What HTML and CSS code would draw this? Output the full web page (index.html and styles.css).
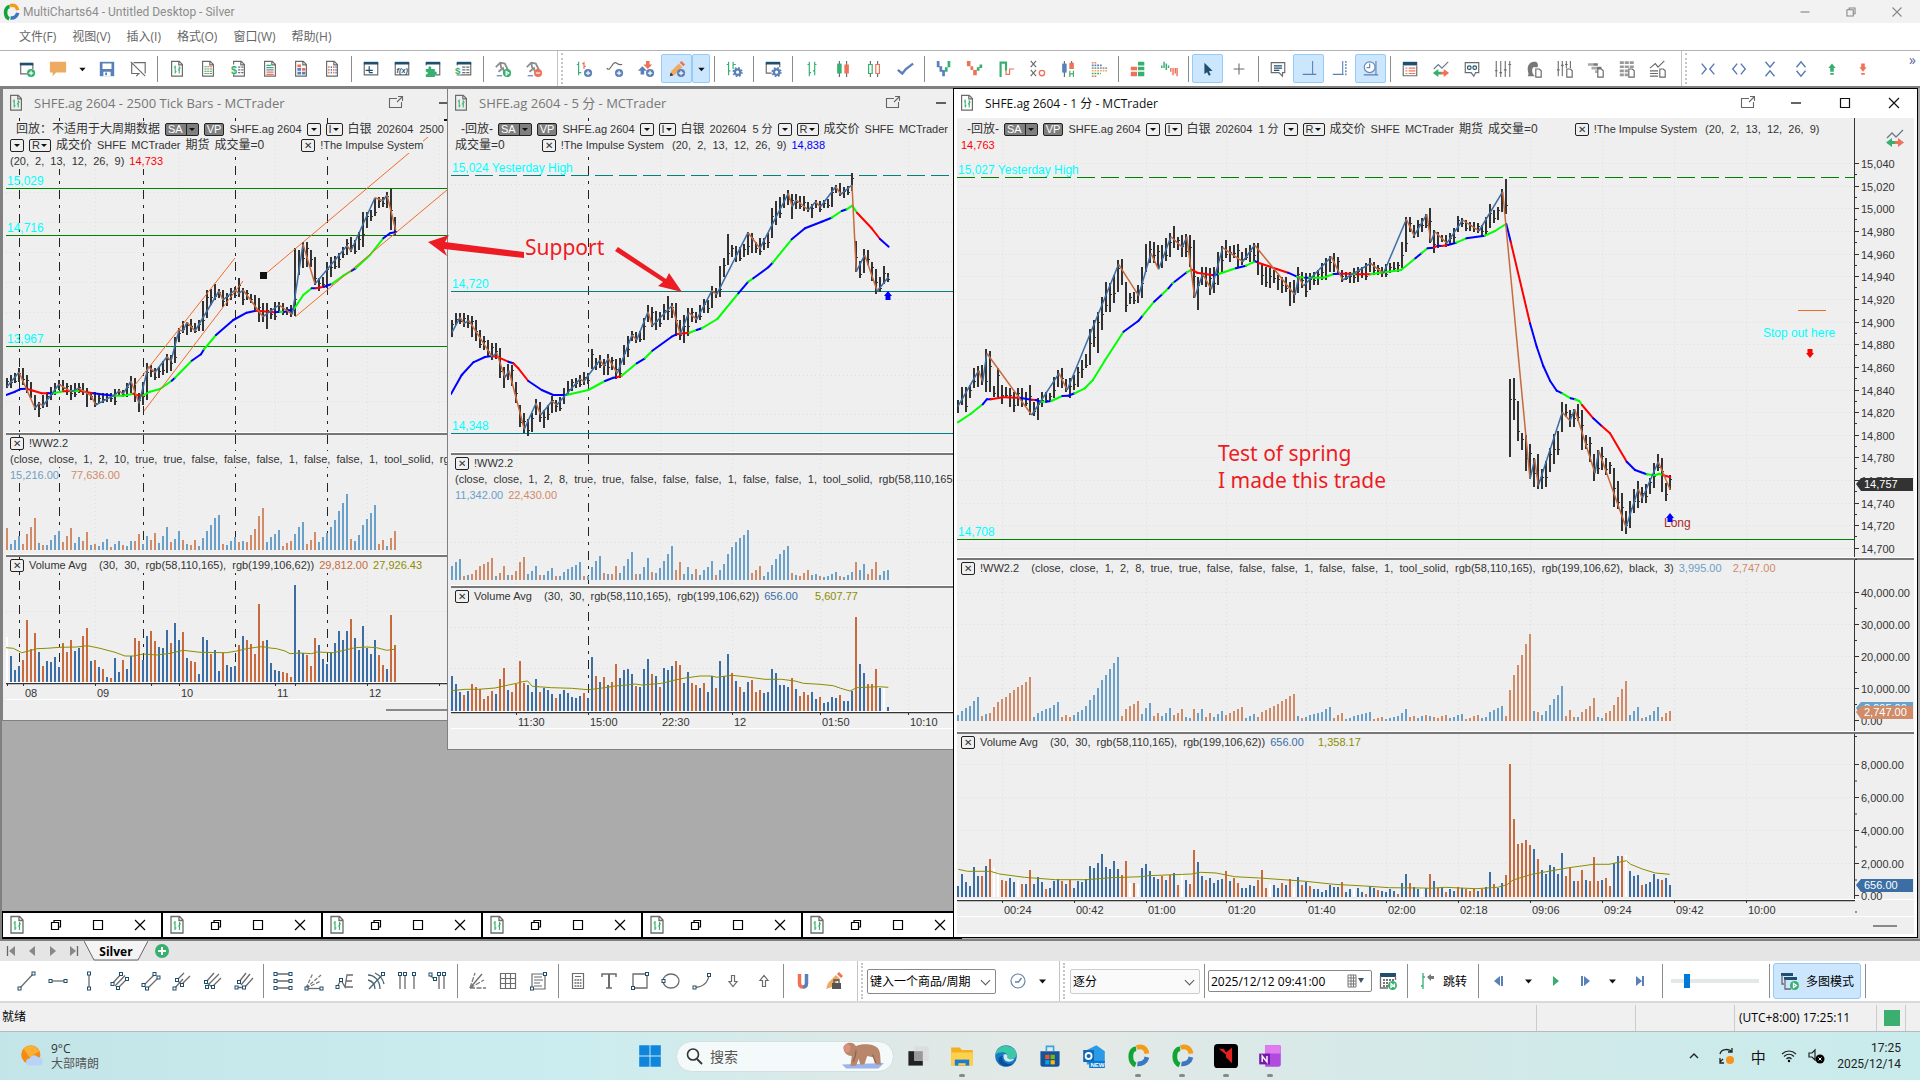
FILE: index.html
```html
<!DOCTYPE html>
<html lang="zh-CN">
<head>
    <meta charset="UTF-8">
    <title>MultiCharts64 - Untitled Desktop - Silver</title>
    <link rel="stylesheet" href="styles.css">
</head>
<body>
    <header class="titlebar">
        <span class="app-logo" data-icon="logo"></span>
        <span class="app-name">MultiCharts64 - Untitled Desktop - Silver</span>
        <div class="app-controls">
            <button data-icon="min" aria-label="最小化"></button>
            <button data-icon="restore" aria-label="还原"></button>
            <button data-icon="close" aria-label="关闭"></button>
        </div>
    </header>

    <nav class="menubar">
        <a href="#">文件(F)</a>
        <a href="#">视图(V)</a>
        <a href="#">插入(I)</a>
        <a href="#">格式(O)</a>
        <a href="#">窗口(W)</a>
        <a href="#">帮助(H)</a>
    </nav>

    <div class="toolbar toolbar-top">
        <div class="tools" data-tools="newWindow open caret save noPresent | docBars docTable docDollar docText docBlocks docDots | tradeBar formula puzzle dollarList | robotOn robotOff"></div>
        <div class="tools handle" data-tools="addBars addStudy addArrows pencil* caret* | barsGear | windowGear | bars candles hollow check | stepBlue stepRed kagi pointFigure heikin profile | blocks delta | cursor* cross | note axisLine* axisDots axisClock* | listRed trade glasses sliders headDoc slidersDoc ladderDoc tableDoc chartDoc"></div>
        <div class="tools handle" data-tools="squeezeH expandH squeezeV expandV upGreen downRed"></div>
        <button class="more" aria-label="更多">»</button>
    </div>

    <main class="workspace">
        <section class="window window-tick">
            <div class="window-title">
                <span class="window-icon" data-icon="docBars"></span>
                <h2>SHFE.ag 2604 - 2500 Tick Bars - MCTrader</h2>
                <button data-icon="popout" aria-label="弹出"></button>
                <button data-icon="min" aria-label="最小化"></button>
                <button data-icon="max" aria-label="最大化"></button>
                <button data-icon="close" aria-label="关闭"></button>
            </div>
            <div class="pane">
                <svg class="plot" id="tick-price"></svg>
                <div class="legend">
                    <div class="row indent"><span class="cjk">回放：不适用于大周期数据</span><button class="tag">SA<i></i></button><button class="tag">VP</button><span>SHFE.ag 2604</span><button class="drop"></button><button class="drop">I</button><span class="cjk">白银</span><span>202604&nbsp; 2500 Ticks</span></div>
                    <div class="row"><button class="drop"></button><button class="drop">R</button><span class="cjk">成交价</span><span>SHFE</span><span>MCTrader</span><span class="cjk">期货</span><span class="cjk">成交量=0</span><button class="cross far" aria-label="移除">✕</button><span>!The Impulse System</span></div>
                    <div class="row"><span>(20,  2,  13,  12,  26,  9)</span><span class="red">14,733</span></div>
                </div>
            </div>
            <div class="pane split">
                <svg class="plot" id="tick-ww"></svg>
                <div class="legend">
                    <div class="row"><button class="cross" aria-label="移除">✕</button><span>!WW2.2</span></div>
                    <div class="row"><span>(close,  close,  1,  2,  10,  true,  true,  false,  false,  false,  1,  false,  false,  1,  tool_solid,  rgb</span></div>
                    <div class="row wide"><span class="sky">15,216.00</span><span class="clay">77,636.00</span></div>
                </div>
            </div>
            <div class="pane split">
                <svg class="plot" id="tick-volume"></svg>
                <div class="legend">
                    <div class="row"><button class="cross" aria-label="移除">✕</button><span>Volume Avg    (30,  30,  rgb(58,110,165),  rgb(199,106,62))</span><span class="rust">29,812.00</span><span class="olive">27,926.43</span></div>
                </div>
            </div>
            <svg class="time-axis" id="tick-time"></svg>
            <div class="scroll"><span></span></div>
        </section>

        <section class="window window-five">
            <div class="window-title">
                <span class="window-icon" data-icon="docBars"></span>
                <h2>SHFE.ag 2604 - 5 分 - MCTrader</h2>
                <button data-icon="popout" aria-label="弹出"></button>
                <button data-icon="min" aria-label="最小化"></button>
                <button data-icon="max" aria-label="最大化"></button>
                <button data-icon="close" aria-label="关闭"></button>
            </div>
            <div class="pane">
                <svg class="plot" id="five-price"></svg>
                <div class="legend">
                    <div class="row indent"><span class="cjk">-回放-</span><button class="tag">SA<i></i></button><button class="tag">VP</button><span>SHFE.ag 2604</span><button class="drop"></button><button class="drop">I</button><span class="cjk">白银</span><span>202604&nbsp; 5 分</span><button class="drop"></button><button class="drop">R</button><span class="cjk">成交价</span><span>SHFE</span><span>MCTrader</span><span class="cjk">期货</span></div>
                    <div class="row"><span class="cjk">成交量=0</span><button class="cross far" aria-label="移除">✕</button><span>!The Impulse System</span><span> (20,  2,  13,  12,  26,  9)</span><span class="blue">14,838</span></div>
                </div>
            </div>
            <div class="pane split">
                <svg class="plot" id="five-ww"></svg>
                <div class="legend">
                    <div class="row"><button class="cross" aria-label="移除">✕</button><span>!WW2.2</span></div>
                    <div class="row"><span>(close,  close,  1,  2,  8,  true,  true,  false,  false,  false,  1,  false,  false,  1,  tool_solid,  rgb(58,110,165)</span></div>
                    <div class="row"><span class="sky">11,342.00</span><span class="clay">22,430.00</span></div>
                </div>
            </div>
            <div class="pane split">
                <svg class="plot" id="five-volume"></svg>
                <div class="legend">
                    <div class="row"><button class="cross" aria-label="移除">✕</button><span>Volume Avg    (30,  30,  rgb(58,110,165),  rgb(199,106,62))</span><span class="steel">656.00</span><span class="olive">    5,607.77</span></div>
                </div>
            </div>
            <svg class="time-axis" id="five-time"></svg>
            <div class="scroll"></div>
        </section>

        <div class="minimized" id="minimized"></div>

        <section class="window window-one active">
            <div class="window-title">
                <span class="window-icon" data-icon="docBars"></span>
                <h2>SHFE.ag 2604 - 1 分 - MCTrader</h2>
                <button data-icon="popout" aria-label="弹出"></button>
                <button data-icon="min" aria-label="最小化"></button>
                <button data-icon="max" aria-label="最大化"></button>
                <button data-icon="close" aria-label="关闭"></button>
            </div>
            <div class="pane scaled">
                <svg class="plot" id="one-price"></svg>
                <div class="legend">
                    <div class="row indent"><span class="cjk">-回放-</span><button class="tag">SA<i></i></button><button class="tag">VP</button><span>SHFE.ag 2604</span><button class="drop"></button><button class="drop">I</button><span class="cjk">白银</span><span>202604&nbsp; 1 分</span><button class="drop"></button><button class="drop">R</button><span class="cjk">成交价</span><span>SHFE</span><span>MCTrader</span><span class="cjk">期货</span><span class="cjk">成交量=0</span><button class="cross far" aria-label="移除">✕</button><span>!The Impulse System</span><span> (20,  2,  13,  12,  26,  9)</span></div>
                    <div class="row"><span class="red">14,763</span></div>
                </div>
                <div class="scale"><svg id="one-price-scale"></svg><button class="trade-btn" data-icon="trade" aria-label="交易"></button></div>
            </div>
            <div class="pane scaled split">
                <svg class="plot" id="one-ww"></svg>
                <div class="legend">
                    <div class="row"><button class="cross" aria-label="移除">✕</button><span>!WW2.2    (close,  close,  1,  2,  8,  true,  true,  false,  false,  false,  1,  false,  false,  1,  tool_solid,  rgb(58,110,165),  rgb(199,106,62),  black,  3)</span><span class="sky">3,995.00</span><span class="clay">  2,747.00</span></div>
                </div>
                <div class="scale"><svg id="one-ww-scale"></svg></div>
            </div>
            <div class="pane scaled split">
                <svg class="plot" id="one-volume"></svg>
                <div class="legend">
                    <div class="row"><button class="cross" aria-label="移除">✕</button><span>Volume Avg    (30,  30,  rgb(58,110,165),  rgb(199,106,62))</span><span class="steel">656.00</span><span class="olive">   1,358.17</span></div>
                </div>
                <div class="scale"><svg id="one-volume-scale"></svg></div>
            </div>
            <svg class="time-axis" id="one-time"></svg>
            <div class="scroll"><span></span></div>
        </section>

        <svg class="notes">
            <g fill="#ed1c24">
                <path d="M428 154l21-7-4 7 79 10v6l-80-9 3 7z"/>
                <path d="M618 159l48 32 3-6 13 19-24-6 5-4-48-31z"/>
            </g>
            <text x="525" y="167">Support</text>
            <text x="1218" y="373">Test of spring</text>
            <text x="1218" y="400">I made this trade</text>
        </svg>
    </main>

    <div class="tabs">
        <button data-icon="first" aria-label="第一个"></button>
        <button data-icon="prev" aria-label="上一个"></button>
        <button data-icon="next" aria-label="下一个"></button>
        <button data-icon="last" aria-label="最后一个"></button>
        <button class="tab"><svg viewBox="0 0 64 20"><path d="M0 0l10 19h44L64 0" fill="#f4f4f4" stroke="#666"/></svg><span>Silver</span></button>
        <button class="add" data-icon="plus" aria-label="添加"></button>
    </div>

    <div class="toolbar toolbar-bottom">
        <div class="tools" data-tools="trend hline vline channel channel2 fork fork2 fork3 | fibo fiboFan elliott arcs timeZones timeExt | gann grid regression | calculator textTool rect ellipse curve arrowDown arrowUp | magnet lock"></div>
        <div class="tools handle">
            <span class="select symbol"><select aria-label="商品"><option>键入一个商品/周期</option></select></span>
            <button class="tool" data-icon="clock" aria-label="周期"></button>
            <button class="tool narrow" data-icon="caret" aria-label="更多周期"></button>
        </div>
        <div class="tools handle">
            <span class="select step"><select aria-label="步长"><option>逐分</option></select></span>
            <span class="sep"></span>
            <label class="datetime"><input type="text" value="2025/12/12 09:41:00" aria-label="回放时间"><span data-icon="datePick"></span></label>
            <button class="tool" data-icon="calendar" aria-label="日历"></button>
            <span class="sep"></span>
            <button class="jump" data-icon="jump">跳转</button>
            <span class="sep"></span>
            <div class="player">
                <button data-icon="stepBack" aria-label="后退"></button>
                <button data-icon="caret" aria-label="后退选项"></button>
                <button data-icon="play" aria-label="播放"></button>
                <button data-icon="stepNext" aria-label="前进"></button>
                <button data-icon="caret" aria-label="前进选项"></button>
                <button data-icon="stepEnd" aria-label="到末尾"></button>
            </div>
            <span class="sep"></span>
            <input class="speed" type="range" min="0" max="100" value="16" aria-label="速度">
            <span class="sep"></span>
            <button class="mode" data-icon="multi">多图模式</button>
            <span class="sep"></span>
        </div>
    </div>

    <div class="statusbar">
        <span class="ready">就绪</span>
        <span class="cell"></span>
        <span class="cell"></span>
        <span class="cell time">(UTC+8:00) 17:25:11</span>
        <span class="cell led"><i></i></span>
        <span class="cell end"></span>
    </div>

    <footer class="taskbar">
        <a class="weather" href="#"><span data-icon="weather"></span><span>9°C<br><small>大部晴朗</small></span></a>
        <div class="apps">
            <button data-icon="windows" aria-label="开始"></button>
            <label class="search"><span data-icon="search"></span><input type="text" value="搜索" aria-label="搜索"><span class="monkey" data-icon="monkey"></span></label>
            <button data-icon="taskView" aria-label="任务视图"></button>
            <button class="running" data-icon="folder" aria-label="文件资源管理器"></button>
            <button data-icon="edge" aria-label="Edge"></button>
            <button data-icon="store" aria-label="Store"></button>
            <button data-icon="outlook" aria-label="Outlook"></button>
            <button class="running" data-icon="logo" aria-label="MultiCharts"></button>
            <button class="running" data-icon="logo" aria-label="MultiCharts"></button>
            <button class="running" data-icon="redApp" aria-label="App"></button>
            <button class="running" data-icon="onenote" aria-label="OneNote"></button>
        </div>
        <div class="tray">
            <button data-icon="chevronUp" aria-label="隐藏的图标"></button>
            <button data-icon="update" aria-label="更新"></button>
            <button class="ime">中</button>
            <button data-icon="wifi" aria-label="网络"></button>
            <button data-icon="sound" aria-label="音量"></button>
            <span class="clock">17:25<br>2025/12/14</span>
        </div>
    </footer>

    <script src="script.js"></script>
</body>
</html>
```

FILE: styles.css
```css
* {
    box-sizing: border-box;
}
body {
    margin: 0;
    height: 100vh;
    display: flex;
    flex-direction: column;
    overflow: hidden;
    font-family: "Open Sans", "Noto Sans CJK SC", sans-serif;
    font-size: 12px;
    color: #222;
    background: #fff;
}
button, input, select {
    font: inherit;
    color: inherit;
    border: none;
    background: none;
    padding: 0;
    margin: 0;
}
button {
    display: flex;
    align-items: center;
    justify-content: center;
}
button svg, span > svg {
    display: block;
    width: 20px;
    height: 20px;
    flex: none;
}

/* title and menu */
.titlebar {
    height: 23px;
    flex: none;
    display: flex;
    align-items: center;
    background: #f2f2f2;
    color: #8c8c8c;
}
.app-name {
    font-family: Roboto, sans-serif;
}
.app-logo svg {
    width: 18px;
    height: 18px;
    margin: 0 3px 0 2px;
}
.app-controls {
    display: flex;
    margin-left: auto;
    color: #888;
}
.app-controls button {
    width: 46px;
}
.app-controls svg {
    width: 18px;
    height: 18px;
}
.menubar {
    height: 28px;
    flex: none;
    display: flex;
    align-items: center;
    gap: 16px;
    padding: 0 0 2px 19px;
    border-bottom: 1px solid #b4b4b4;
}
.menubar a {
    color: #666;
    text-decoration: none;
}

/* toolbars */
.toolbar {
    flex: none;
    display: flex;
    background: #fff;
}
.toolbar-top {
    height: 35px;
    padding-left: 11px;
}
.toolbar-bottom {
    height: 42px;
    padding-left: 11px;
    border-bottom: 2px solid #d9d9d9;
}
.tools {
    display: flex;
    align-items: center;
    padding-right: 8px;
}
.tools.handle {
    border-left: 1px solid #c4c4c4;
    padding-left: 10px;
    position: relative;
}
.tools.handle::before {
    content: "";
    position: absolute;
    left: 3px;
    top: 2px;
    bottom: 2px;
    border-left: 2px dotted #c4c4c4;
}
.tool {
    width: 31px;
    height: 29px;
    border: 1px solid transparent;
    border-radius: 2px;
}
.toolbar-top .tool svg {
    width: 18px;
    height: 18px;
}
.tool.narrow {
    width: 18px;
}
.tool.on {
    background: #cce6fd;
    border-color: #94cbf8;
}
.sep {
    width: 1px;
    height: 26px;
    margin: 0 3px 0 4px;
    background: #8c8c8c;
}
.toolbar-bottom .sep {
    height: 34px;
}
.more {
    margin: 2px 4px auto auto;
    font-size: 14px;
    line-height: 14px;
    color: #5a5f9c;
}

/* workspace with chart windows */
.workspace {
    position: relative;
    flex: 1;
    overflow: hidden;
    display: flex;
    flex-direction: column;
    justify-content: flex-end;
    border: 2px solid #808080;
    border-width: 2px 0 2px 2px;
    background: #ababab;
}
.window {
    position: absolute;
    isolation: isolate;
    top: 0;
    display: grid;
    border: 1px solid #808080;
    padding: 0 3px;
    background: #efefef;
}
.window-tick {
    left: 0;
    width: 564px;
    grid-template-rows: 29px 315px 122px 128px 17px 20px;
}
.window-five {
    left: 445px;
    width: 616px;
    grid-template-rows: 29px 335px 133px 126px 17px 20px;
}
.window-one {
    left: 951px;
    right: 2px;
    grid-template-rows: 29px 440px 174px 168px 17px 17px 3px;
}
.window.active {
    border-color: #000;
    background: #fff;
}
.window-title {
    display: flex;
    align-items: center;
    min-width: 0;
    margin-right: -4px;
    padding-bottom: 2px;
    color: #777;
}
.window-title h2 {
    flex: 1;
    margin: 0 0 0 9px;
    font-size: 13px;
    font-weight: normal;
}
.active .window-title h2 {
    font-size: 12px;
}
.window-icon svg {
    width: 18px;
    height: 18px;
    margin-left: 1px;
}
.window-title button {
    width: 49px;
    color: #111;
}
.window-title button:nth-of-type(1) {
    color: #666;
}
.window.active .window-title {
    color: #111;
}
.pane {
    display: grid;
    grid-template-columns: minmax(0, 1fr);
    grid-template-rows: minmax(0, 1fr);
    background: #efefef;
    border-bottom: 1px solid #fff;
    min-height: 0;
}
.pane.scaled {
    grid-template-columns: minmax(0, 1fr) 60px;
}
.pane.split {
    border-top: 2px solid #777;
}
.plot, .legend {
    grid-row: 1;
    grid-column: 1;
}
.plot, .scale > svg {
    width: 100%;
    height: 100%;
}
.scale > svg {
    display: block;
    overflow: visible;
}
.scale {
    position: relative;
    border-left: 1px solid #333;
}
.trade-btn {
    position: absolute;
    top: 10px;
    right: 9px;
}
svg text {
    font-family: "Liberation Sans", sans-serif;
    font-size: 11px;
    fill: #333;
}
svg text.label {
    font-size: 12px;
    fill: #0ff;
}
.time-axis {
    width: 100%;
    height: 17px;
    background: #efefef;
    border-bottom: 1px solid #fff;
}
.scroll {
    display: flex;
    align-items: center;
    background: #efefef;
}
.window-tick .scroll span {
    width: 120px;
    height: 2px;
    margin-left: 380px;
    background: #888;
}
.window-one .scroll span {
    width: 24px;
    height: 2px;
    margin: 0 17px 0 auto;
    background: #888;
}

/* status lines on the charts */
.legend {
    z-index: 1;
    padding: 3px 0 0 4px;
    overflow: hidden;
    font-family: "Liberation Sans", "Noto Sans CJK SC", sans-serif;
    font-size: 11px;
    color: #333;
}
.split .legend {
    padding-top: 0;
}
.legend .row {
    display: flex;
    align-items: center;
    gap: 5px;
    height: 16px;
    line-height: 16px;
    white-space: pre;
}
.legend .row.indent {
    padding-left: 6px;
}
.legend .row.wide {
    gap: 12px;
}
.legend .row > * {
    flex: none;
    background-color: #efefef;
}
.legend .cjk {
    font-size: 12px;
}
.legend button {
    height: 13px;
    border: 1px solid #222;
    border-radius: 2px;
    line-height: 11px;
}
.legend .row .tag {
    background: #7f7f7f;
    color: #fff;
    padding: 0 2px;
}
.tag i {
    display: flex;
    align-items: center;
    height: 11px;
    margin: 0 -1px 0 3px;
    padding: 0 1px;
    border-left: 1px solid #222;
}
.tag i::after, .drop::after {
    content: "";
    margin: 0 1px;
    border: 3px solid transparent;
    border-top-color: #111;
    border-bottom: none;
}
.drop {
    padding: 0 2px;
    min-width: 13px;
}
.cross {
    width: 14px;
    font-size: 10px;
}
.cross.far {
    margin-left: 32px;
}
.red { color: #f00; }
.blue { color: #00f; }
.sky { color: #6ba0c8; }
.clay { color: #d08b68; }
.rust { color: #c76a3e; }
.steel { color: #3a6ea5; }
.olive { color: #8c8c00; }

.notes {
    position: absolute;
    left: -2px;
    top: 0;
    width: 100%;
    height: 100%;
    pointer-events: none;
}
.notes text {
    font-family: "Noto Sans", sans-serif;
    font-size: 21px;
    fill: #ed1c24;
}

.minimized {
    display: flex;
}
.minimized div {
    flex: none;
    width: 160px;
    height: 28px;
    display: flex;
    align-items: center;
    border: 1px solid #000;
    border-width: 2px 1px;
    background: #fff;
}
.minimized span {
    margin: 0 8px 0 4px;
}
.minimized button {
    width: 42px;
    flex: none;
    color: #000;
}

/* workspace tabs */
.tabs {
    height: 20px;
    flex: none;
    display: flex;
    align-items: center;
    background: #e5e5e5;
    color: #666;
}
.tabs > button {
    width: 21px;
}
.tabs .tab {
    position: relative;
    width: 64px;
    font-weight: bold;
    color: #000;
    height: 20px;
}
.tab svg {
    position: absolute;
    left: 0;
    top: 0;
    width: 64px;
}
.tab span {
    position: relative;
}
.tabs .add {
    margin-left: 3px;
}

/* data playback controls */
.select {
    position: relative;
    height: 25px;
    border: 1px solid #888;
    border-radius: 2px;
}
.select select {
    appearance: none;
    width: 100%;
    height: 100%;
    padding: 0 18px 0 2px;
    color: #000;
}
.select::after {
    content: "";
    position: absolute;
    right: 6px;
    top: 7px;
    width: 6px;
    height: 6px;
    border: 1px solid #555;
    border-width: 0 1px 1px 0;
    rotate: 45deg;
}
.symbol {
    width: 129px;
    margin-left: -1px;
}
.symbol + .tool {
    margin-left: 6px;
}
.step {
    width: 130px;
    border-color: #ccc;
    background: #fafafa;
}
.datetime {
    display: flex;
    align-items: center;
    width: 164px;
    height: 22px;
    border: 1px solid #888;
    border-radius: 2px;
}
.datetime input {
    width: 134px;
    padding-left: 2px;
    color: #000;
}
.datetime svg {
    width: 24px;
}
.jump {
    gap: 4px;
    padding: 0 7px 0 8px;
    color: #000;
}
.player {
    display: flex;
    padding: 0 4px;
}
.player button {
    width: 28px;
}
.speed {
    appearance: none;
    width: 88px;
    height: 14px;
    margin: 0 6px 0 5px;
    background: linear-gradient(#e3e8e8, #e3e8e8) center / 100% 4px no-repeat;
}
.speed::-webkit-slider-thumb {
    appearance: none;
    width: 6px;
    height: 14px;
    background: #0078d7;
}
.mode {
    height: 36px;
    width: 88px;
    gap: 6px;
    border: 1px solid #94cbf8;
    border-radius: 3px;
    background: #cce6fd;
    color: #000;
}

.statusbar {
    height: 29px;
    flex: none;
    display: flex;
    align-items: stretch;
    line-height: 28px;
    border-bottom: 1px solid #b4bcbc;
    background: #f0f0f0;
    color: #000;
}
.ready {
    flex: 1;
    padding-left: 2px;
}
.cell {
    width: 99px;
    margin-top: 2px;
    border-left: 1px solid #ccc;
}
.cell.time {
    width: 142px;
    padding-left: 4px;
    line-height: 25px;
}
.cell.led {
    display: flex;
    align-items: center;
    width: 29px;
    padding-left: 7px;
}
.led i {
    width: 16px;
    height: 16px;
    background: #3cae70;
}
.cell.end {
    width: 15px;
}

/* windows taskbar */
.taskbar {
    height: 48px;
    flex: none;
    display: grid;
    grid-template-columns: 1fr auto 1fr;
    align-items: center;
    background: linear-gradient(90deg, #c4e5e8, #cbedef 30%, #dde8e6 45%, #e4e9e6 56%, #d6e9e8 70%, #c8ebec);
}
.weather {
    display: flex;
    align-items: center;
    gap: 7px;
    padding-left: 20px;
    line-height: 15px;
    color: #333;
    text-decoration: none;
}
.weather small {
    font-size: 12px;
    color: #555;
}
.weather svg {
    width: 24px;
    height: 24px;
}
.apps {
    display: flex;
    align-items: center;
}
.apps button {
    position: relative;
    width: 44px;
    height: 44px;
}
.apps button svg {
    width: 24px;
    height: 24px;
}
.apps .running::after {
    content: "";
    position: absolute;
    left: 19px;
    bottom: 1px;
    width: 6px;
    height: 3px;
    border-radius: 2px;
    background: #888;
}
.search {
    display: flex;
    align-items: center;
    width: 218px;
    height: 31px;
    margin: 0 2px 0 4px;
    padding: 0 4px 0 7px;
    border-radius: 16px;
    background: #f4f9f9;
    border: 1px solid #d3dfe0;
}
.search input {
    width: 132px;
    margin-left: 6px;
    font-size: 14px;
    color: #555;
}
.search .monkey svg {
    width: 42px;
    height: 28px;
}
.tray {
    display: flex;
    align-items: center;
    justify-content: flex-end;
    padding-right: 19px;
    color: #111;
}
.tray button {
    width: 32px;
}
.tray button:nth-of-type(4) {
    width: 30px;
}
.tray button:nth-of-type(5) {
    width: 24px;
}
.tray .ime {
    font-size: 15px;
}
.clock {
    margin-left: 9px;
    line-height: 16px;
    font-family: Roboto, sans-serif;
    text-align: right;
    color: #222;
}
```

FILE: script.js
```javascript
// ---------- icons ----------
const GREEN = '#35b06e', RED = '#ee7158', BLUE = '#5a80b8', NAVY = '#1f4e6e', GRAY = '#6b6b6b';
const line = (d, c = GRAY, w = 1.3) => `<path d="${d}" fill="none" stroke="${c}" stroke-width="${w}"/>`;
const dashes = (d, c, w, gaps) => `<path d="${d}" fill="none" stroke="${c}" stroke-width="${w}" stroke-dasharray="${gaps}"/>`;
const fill = (d, c = GRAY) => `<path d="${d}" fill="${c}"/>`;
const dot = (x, y) => `<rect x="${x - 1.5}" y="${y - 1.5}" width="3" height="3" fill="#fff" stroke="${NAVY}"/>`;
const badge = (c, inner) => `<circle cx="14.500" cy="14.500" r="4.500" fill="${c}"/>` + line(inner, '#fff', 1.3);
const plusBadge = c => badge(c, 'M12 14.500h5M14.500 12v5');
const doc = line('M4 1.500h8.500l3.500 3.500v13H4zM12 1.500v4h4');
const miniDoc = fill('M12 10h4l2 2v7h-6z', '#fff') + line('M12 10h4l2 2v7h-6z');
const frame = line('M2.500 3v13.500h15V3') + fill('M2 2h16v3H2z', NAVY);
const gear = `<circle cx="14" cy="13.500" r="3" fill="none" stroke="${BLUE}" stroke-width="2.500"/><circle cx="14" cy="13.500" r="4.700" fill="none" stroke="${BLUE}" stroke-width="2" stroke-dasharray="1.850"/>`;
const robot = line('M2 8l5-5 5 1 3 6-4 3-1-4-5 4M7 3l1 6', '#8c8c8c', 2) + line('M3 17.500h6', '#5a80b8');
const logo = line('M8.500 4C5.500 4 4 7 4 10.500c0 4 1.500 6 4 7', '#12a536', 4) + line('M9 3c4-1.500 7.500 0 8.500 5', '#f59b1c', 4) + line('M9.500 16.500c3.500.5 7-1.500 8-5.500', '#3c78c2', 4);

const icons = {
    logo,
    min: line('M5 10h10', 'currentColor', 1.3),
    max: line('M5.500 5.500h9v9h-9z', 'currentColor', 1.2),
    restore: line('M5.500 7.500h7v7h-7zM8 7V5.500h6.500V12H13', 'currentColor', 1.2),
    close: line('M5 5l10 10M15 5L5 15', 'currentColor', 1.2),
    popout: line('M12 5.500H4.500v9h12V9M12 9l5-5M13 3.500h4.500V8', 'currentColor', 1.1),
    caret: fill('M7 8.500h7l-3.500 4z', '#111'),
    newWindow: line('M3 4v11.500h7M16.500 4v6') + fill('M2 3h15v3H2z', NAVY) + plusBadge(GREEN),
    open: fill('M1 2h18v12H8l-4 4v-4H1z', '#eeaa60'),
    save: fill('M2 2h16v16H2z', BLUE) + fill('M5 4h10v6H5zM6 13h8v5H6z', '#fff') + fill('M8 14h2v3H8z', BLUE),
    noPresent: line('M2 2l16 16M5 3h13v12M3 3v12h8l-3 3M3 15h3'),
    docBars: doc + line('M8 6v9M6.500 8H8M8 13h1.500M12.500 7v8M11 11h1.500M12.500 9H14', GREEN, 1.2),
    docTable: doc + line('M6 7.500h2.500M6 10h2.500M6 12.500h2.500M6 15h2.500', GREEN, 1.3) + line('M9 7.500h2.500M12 7.500h2.500M9 10h2.500M9 15h2.500', RED, 1.3) + line('M12 10h2.500M9 12.500h2.500M12 12.500h2.500M12 15h2.500', GREEN, 1.3),
    docDollar: doc + fill('M1 5h8v11H1z', '#fff') + `<text x="1" y="15" style="font-size:12px;font-weight:bold;fill:${GREEN}">$</text>` + dashes('M9 8h6M9 11h6M9 14h6', GRAY, 1.3, '2.500 1'),
    docText: doc + line('M6 6h5M6 8.500h8', GREEN) + line('M6 11h8', BLUE) + line('M6 13.500h8M6 16h8', RED),
    docBlocks: doc + fill('M6 5h4v3H6zM11 9h4v3h-4z', RED) + fill('M6 9h4v3H6zM6 13h4v3H6zM11 13h4v3h-4z', BLUE),
    docDots: doc + dashes('M6.500 7v9M12 7v9', RED, 1.5, '2 1') + dashes('M9.300 7v9M14.500 7v9', BLUE, 1.5, '2 1'),
    tradeBar: frame + line('M8 7v7M4 11.500h8M8 14h4', NAVY),
    formula: frame + `<text x="4" y="14" style="font-size:8px;font-style:italic;font-weight:bold;fill:${NAVY}">f(x)</text>`,
    puzzle: frame + fill('M1 6h10v12H1z', '#fff') + fill('M2 10h3c-1-4 4-4 3 0h4v3c3-1 3 4 0 3v3H2v-3c3 0 3-3 0-3z', GREEN),
    dollarList: frame + fill('M0 6h7v10H0z', '#fff') + `<text x="0" y="15" style="font-size:11px;font-weight:bold;fill:${GREEN}">$</text>` + dashes('M8 8h8M8 11h8M8 14h8', GRAY, 1.3, '3.500 1'),
    robotOn: robot + badge(GREEN, 'M13.500 12.500v4l3-2z'),
    robotOff: robot + badge(RED, 'M12 14.500h5'),
    addBars: line('M4 2v15M2 5h2M4 14h3', GREEN) + line('M10 2v8M8 4h2M10 7h2', RED) + plusBadge(BLUE),
    addStudy: line('M1 9c3 5 6-6 9-6s2 3 8 2') + plusBadge(BLUE),
    addArrows: fill('M10 1h4v4h3l-5 5-5-5h3z', RED) + fill('M1 12l5-5 5 5H8v4H4v-4z', BLUE) + plusBadge(BLUE),
    pencil: fill('M2 18l2-6 8-8 4 4-8 8z', '#eeaa60') + fill('M2 18l1-4 3 3z', '#333') + fill('M13 3l2-2 4 4-2 2z', RED) + plusBadge(BLUE),
    barsGear: line('M4 2v15M2 5h2M4 12h2', GREEN) + line('M9 2v8M9 5h3', GREEN) + gear,
    windowGear: line('M2.500 3v11.500h6M17.500 4v4') + fill('M2 2h16v3H2z', NAVY) + gear,
    bars: line('M7 2v16M5 5h2M7 14h2M13 2v15M11 12h2M13 5h2', GREEN, 1.3),
    candles: line('M6 1v18M14 1v18') + fill('M3.500 4h5v11h-5z', GREEN) + fill('M11.500 5h5v10h-5z', RED),
    hollow: line('M6 1v4M6 15v4M14 1v4M14 15v4') + line('M4 5h4v10H4z', GREEN) + line('M12 5h4v10h-4z', RED),
    check: line('M2 11l5 4 4-5 8-6', BLUE, 2.6),
    stepBlue: fill('M2 1h3v7H2zM5 7h3v6H5zM8 11h3v7H8z', BLUE) + fill('M11 8h3v5h-3zM14 1h3v7h-3z', GREEN),
    stepRed: fill('M1 1h4v6H1zM5 7h3v4H5zM8 11h4v6H8z', RED) + fill('M12 8h3v4h-3zM15 5h3v4h-3z', GREEN),
    kagi: line('M4 19V3h6v9', GREEN, 2.4) + line('M10 12v4h4v-6h5', RED),
    pointFigure: line('M3 1l6 7M9 1L3 8M3 11l6 7M9 11l-6 7') + `<circle cx="15.500" cy="14.500" r="3" fill="none" stroke="${RED}" stroke-width="1.500"/>`,
    heikin: line('M6 1v18M14 1v9') + fill('M3.500 4h5v10h-5z', BLUE) + fill('M11.500 3h5v7h-5z', RED) + line('M12 12v7M16 12v7M12 15.500h4', GREEN),
    profile: ['M2 3h6', 'M2 6h12', 'M2 9h17', 'M2 12h17', 'M2 15h10', 'M2 18h5'].map((d, i) => dashes(d, ['#e08a5a', '#5a80b8', '#999', '#eeaa60', GREEN, RED][i], 1.8, '2 1')).join(''),
    blocks: fill('M10 2h7v4h-7zM10 7.500h7v4h-7zM10 13h7v5h-7z', GREEN) + fill('M2 7.500h7v4H2zM2 13h7v5H2z', RED),
    delta: line('M2 9V6M4.500 9V2M7 11V4M9.500 9V6', GREEN, 1.6) + line('M12 9v4M14.500 9v8M17 9v6M19 9v9', RED, 1.6),
    cursor: fill('M6 3l9 9-4 .5 2 4-2 1-2-4-3 2z', NAVY),
    cross: line('M10 4v12M4 10h12', GRAY, 1.2),
    note: line('M2.500 3h15v11H15v4l-4-4H2.500z') + line('M5.500 6.500h9M5.500 9h9M5.500 11.500h6', NAVY),
    axisLine: line('M14 1v15M3 16h15', BLUE, 1.2),
    axisDots: line('M13 1v15M2 16h12', BLUE, 1.2) + dashes('M16.500 1v16', BLUE, 1.6, '2 1.500'),
    axisClock: `<circle cx="8.500" cy="8" r="6" fill="#fff" stroke="#6a87b5" stroke-width="1.300"/>` + line('M8.500 4v4.500H5', '#6a87b5') + line('M15.500 1v16M2 16.500h16', BLUE, 1.2),
    listRed: fill('M2 2h16v4H2z', NAVY) + line('M2.500 6v11.500h15V6') + line('M5 9h2M8.500 9H16M5 12h2M8.500 12H16M5 15h2M8.500 15H16', RED),
    trade: line('M2 10l5-5 4 4 7-7', '#6d7890') + fill('M1 14.500l6-4.500v3h3v3H7v3z', GREEN) + fill('M19 14.500L13 10v3h-3v3h3v3z', RED),
    glasses: line('M2.500 3h15v11H14l-2 4-3-4H2.500z') + `<circle cx="7" cy="8.500" r="2" fill="none" stroke="${NAVY}" stroke-width="1.300"/><circle cx="13" cy="8.500" r="2" fill="none" stroke="${NAVY}" stroke-width="1.300"/>`,
    sliders: line('M2.500 1v18M7.500 1v18M12.500 1v18M17.500 1v18M1 12h3M6 14h3M11 11h3M16 5h3', GRAY, 1.2),
    headDoc: fill('M3 18c2-3 0-4 0-8 0-5 3-8 8-8 3 0 4 3 3 6H9c-2 4-1 7 2 10z', '#777') + miniDoc,
    slidersDoc: line('M2.500 1v17M7 1v17M11.500 1v8M16 1v8M1 11h3M5.500 6h3M10 5h3', GRAY, 1.2) + miniDoc,
    ladderDoc: line('M1 5h6M5 9h6M9 13h3', '#aaa', 3) + line('M7 5h5M11 9h5', '#777', 3) + miniDoc,
    tableDoc: dashes('M2 3h16M2 7.500h16M2 12h9M2 16.500h9', '#999', 3, '4.500 1') + miniDoc,
    chartDoc: line('M1 9l6-5 3 4 7-7M1 12h9M1 15h9M1 18h9') + miniDoc,
    squeezeH: line('M3 4l5 6-5 6M17 4l-5 6 5 6', '#5677b5', 1.5),
    expandH: line('M8 4l-5 6 5 6M12 4l5 6-5 6', '#5677b5', 1.5),
    squeezeV: line('M5 2l5 6 5-6M5 18l5-6 5 6', '#5677b5', 1.5),
    expandV: line('M5 8l5-6 5 6M5 12l5 6 5-6', '#5677b5', 1.5),
    upGreen: fill('M10 4l4 5h-2v4H8V9H6zM8 14.500h4v2H8z', GREEN),
    downRed: fill('M8 4h4v4h2l-4 5-4-5h2zM8 14.500h4v2H8z', RED),

    first: line('M6.500 5v10', '#666') + fill('M14 5v10l-6-5z', '#888'),
    prev: fill('M13 5v10l-6-5z', '#888'),
    next: fill('M7 5v10l6-5z', '#888'),
    last: fill('M6 5v10l6-5z', '#888') + line('M13.500 5v10', '#666'),
    plus: `<circle cx="10" cy="10" r="7" fill="${GREEN}"/>` + line('M10 6v8M6 10h8', '#fff', 2),

    trend: line('M2.500 17.500l14-15') + dot(2.5, 17.5) + dot(16.5, 2.5),
    hline: line('M2 10h16') + dot(2.5, 10) + dot(17.5, 10),
    vline: line('M10 2v16') + dot(10, 2.5) + dot(10, 17.5),
    channel: line('M2 13L12 2M8 17L18 7M5 15L15 4.500') + dot(2.5, 13) + dot(11, 3) + dot(17, 8) + dot(8, 17),
    channel2: line('M3 14L14 3M7 17L18 6') + dot(2.5, 14) + dot(13.5, 3) + dot(6, 17.5) + dot(17.5, 6.5),
    fork: line('M2 18l9-10M5 9L12 2M9 14l9-9M5 9l5 5') + dot(5, 9) + dot(10, 14) + dot(2.5, 17.5),
    fork2: line('M3 11L11 2M6 13L16 3M9 16l9-9M3 11l6 5') + dot(3, 11) + dot(4, 16) + dot(10, 16),
    fork3: line('M5 11l7-9M7 14l9-11M11 16l8-9M2 16.500h9') + dot(2.5, 16.5) + dot(10, 16.5) + dot(5, 11),
    fibo: line('M2 3h16M2 10h16M2 17h16') + [2.5, 17.5].map(x => dot(x, 3) + dot(x, 10) + dot(x, 17)).join(''),
    fiboFan: line('M2 17.500h16') + dashes('M2 17L9 2M2 17L17 4M2 17l15-7', '#777', 1.2, '4 1.500') + dot(2.5, 17.5) + dot(17.5, 17.5),
    elliott: line('M2 16l4-7 4 7 2-12h6M11 10h6M10 16h8') + dot(2.5, 16) + dot(6, 9),
    arcs: line('M3 18L18 2M2 4c6 0 12 5 12 14M2 9c4 1 7 4 7 9M9 2c4 2 8 6 9 11', '#4a6473') + dot(17, 3),
    timeZones: line('M3 3v15M8 3v15M17 3v15') + dot(3, 3) + dot(8, 3) + dot(17, 3),
    timeExt: line('M2 4l5 5M11 3v15M16 3v15') + dot(2.5, 3.5) + dot(7, 8) + dot(11, 3) + dot(16, 3),
    gann: line('M3 17L15 3') + dashes('M3 17L8 2M3 17h16M3 17L17 9', '#777', 1.3, '5 1.500'),
    grid: line('M2.500 2.500h15v15h-15zM7.500 2v16M12.500 2v16M2 7.500h16M2 12.500h16', GRAY, 1.2),
    regression: line('M3 3h13v15H3zM5 6h8M5 9h9M5 12h6M5 15h8', GRAY, 1.2) + dot(16, 3) + dot(3, 17.5),
    calculator: line('M4.500 2.500h11v15h-11zM7 5.500h6', GRAY, 1.2) + dashes('M6.500 9h7M6.500 12h7M6.500 15h7', GRAY, 1.6, '2 .7'),
    textTool: line('M3 6V3h14v3M7 17h6', GRAY, 1.5) + line('M10 3v14', GRAY, 2),
    rect: line('M3 3h14v14H3z') + dot(17, 3) + dot(3, 17),
    ellipse: `<ellipse cx="10" cy="10" rx="8" ry="7" fill="none" stroke="${GRAY}" stroke-width="1.300"/>` + dot(2.5, 10),
    curve: line('M2.500 16.500C11 16 16 11 17 4') + dot(2.5, 16.5) + dot(17, 4),
    arrowDown: line('M8.500 4.500h3v6h2.500l-4 5-4-5h2.500z', GRAY, 1.2),
    arrowUp: line('M8.500 15.500h3v-6h2.500l-4-5-4 5h2.500z', GRAY, 1.2),
    magnet: line('M6.500 3v9q0 4 3.500 4', RED, 3.5) + line('M10 16q3.500 0 3.500-4V3', BLUE, 3.5),
    lock: fill('M2 18l2-6 8-8 4 4-8 8z', '#eeaa60') + fill('M13 3l2-2 4 4-2 2z', RED) + fill('M8 12h9v6H8z', '#555') + line('M10 12V9h5v3', '#555'),
    clock: `<circle cx="10" cy="10" r="7" fill="#fff" stroke="#6a87a5" stroke-width="1.200"/>` + line('M7 11h3.500l3-4', BLUE),
    datePick: line('M3 4h8v12H3zM3 7h8M3 10h8M3 13h8M6 4v12M8.500 4v12', '#777', 1) + fill('M13 7h6l-3 5z', '#456'),
    calendar: fill('M2 2h16v4H2z', NAVY) + line('M2.500 5v12H10M17.500 5v4') + dashes('M5 9h11M5 12h8M5 15h6', '#777', 2, '2 1') + badge(GREEN, 'M13 12.500v4l2.500-2zM16.500 12.500v4'),
    jump: line('M4 2v16M2 15h2M4 6h2', GREEN, 1.3) + fill('M8 6l4-3v2h3v3h-3v2z', '#777'),
    stepBack: fill('M4 10l6-5v10z', BLUE) + fill('M11 5h2v10h-2z', BLUE),
    play: fill('M7 5v10l6-5z', GREEN),
    stepNext: fill('M7 5h2v10H7zM10 5v10l6-5z', BLUE),
    stepEnd: fill('M6 5v10l6-5zM12 5h2v10h-2z', BLUE),
    multi: fill('M1 2h12v3H1zM4 6h13v3H4z', NAVY) + line('M2 4v9h2M5 8v10h6') + badge(GREEN, 'M13.500 12.500v4l3-2z'),

    weather: '<circle cx="9" cy="9" r="8" fill="#f58b12"/>' + fill('M3 4a8 8 0 0 1 13 2l-8 5z', '#fbb034') + fill('M8 18a3 3 0 0 1 0-6 4 4 0 0 1 7-1 3.500 3.500 0 0 1 1 7z', '#b7d3f5'),
    windows: fill('M1 1h8.600v8.600H1zM10.400 1H19v8.600h-8.600zM1 10.400h8.600V19H1zM10.400 10.400H19V19h-8.600z', '#0f86dd'),
    search: '<circle cx="9" cy="8.500" r="5.500" fill="none" stroke="#333" stroke-width="1.600"/>' + line('M13 13l5 5', '#333', 1.8),
    monkey: fill('M-5 16l30-1-4 4H-2z', '#9db4ea') + fill('M-4 4c1-4 7-5 9-1 4-2 13-2 16 2 2 3 1 8 2 11h-4l-1-5-5-1-2 6H8l-1-4-2 5H1l1-7c-4 0-6-3-6-6z', '#b8876b') + fill('M-4 4c1-4 6-3 5 1s-4 3-5-1z', '#dc8f84') + line('M5 6c0 4-1 6-2 8M17 9l2 6', '#94664d', 1),
    taskView: fill('M2 6h12v12H2z', '#222') + fill('M7 2h12v12H7z', '#ddd') + fill('M7 6h7v8H7z', '#999'),
    folder: fill('M1 3h7l2 2h9v13H1z', '#f2b01e') + fill('M1 7h18v11H1z', '#fdd04e') + fill('M4 13h12v5H4z', '#1d7bd0') + fill('M7 16h6v2H7z', '#fdd04e'),
    edge: '<circle cx="10" cy="10" r="9" fill="#1678c8"/>' + fill('M1 9C2 3 8 0 13 2c5 1 7 6 5 9-2 2-6 2-7 0 2-4-6-6-10-2z', '#3dc7a4') + fill('M7 10c-1 5 4 8 9 6-3 3-9 4-12-1-1-3 1-5 3-5z', '#0b4f96') + fill('M8 9c2-1 4 0 3 2 1 2 4 2 6 1-2 4-10 4-9-3z', '#cfeaf0'),
    store: fill('M2 6h16v11a2 2 0 0 1-2 2H4a2 2 0 0 1-2-2z', '#16549a') + line('M7 6V2h6v4', '#35a5df') + fill('M6 9h3.500v3.500H6z', '#f25022') + fill('M10.500 9H14v3.500h-3.500z', '#7fba00') + fill('M6 13.500h3.500V17H6z', '#00a4ef') + fill('M10.500 13.500H14V17h-3.500z', '#ffb900'),
    outlook: fill('M4 5l8-4 7 5v11H4z', '#2b9be8') + fill('M1 5h9v10H1z', '#1066b8') + '<circle cx="5.500" cy="10" r="2.500" fill="none" stroke="#fff" stroke-width="1.500"/>' + fill('M6 14h13v6H6z', '#0a7ad0') + '<text x="7" y="19" style="font-size:5px;font-weight:bold;fill:#fff">NEW</text>',
    redApp: '<rect width="20" height="20" rx="3"/>' + fill('M4 4h4l2 3 5-4v13l-5-5v-2z', '#e3211c'),
    onenote: fill('M6 1h12q1 0 1 2v14q0 2-2 2H6z', '#b14be0') + fill('M6 1h12q1 0 1 2v5H6z', '#df7cf0') + fill('M1 8h9v9H1z', '#7719aa') + line('M3.500 15v-5l4 5v-5', '#fff', 1.2),
    chevronUp: line('M6 12l4-4 4 4', '#222', 1.4),
    update: line('M4 8c1-5 9-6 12-2M16 2v4h-4M4 12v5h4M4 16l3-3', '#222', 1.3) + '<circle cx="14" cy="14" r="4" fill="#f5941d"/>',
    wifi: line('M3 8c4-4 10-4 14 0M5 10.500c3-3 7-3 10 0M7.500 13c1.500-1.500 3.500-1.500 5 0', '#222', 1.2) + '<circle cx="10" cy="15" r="1.200"/>',
    sound: line('M9 14l-3-3H3V7h3l3-3z', '#222', 1.2) + '<circle cx="14" cy="13" r="4.500"/>' + line('M12.500 11.500l3 3M15.500 11.500l-3 3', '#fff', 1)
};

document.querySelectorAll('[data-tools]').forEach(bar => {
    bar.innerHTML = bar.dataset.tools.split(' ').map(item => {
        if (item === '|') return '<span class="sep"></span>';
        const name = item.replace('*', '');
        const cls = 'tool' + (item.endsWith('*') ? ' on' : '') + (name === 'caret' ? ' narrow' : '');
        return `<button class="${cls}" data-icon="${name}" aria-label="${name}"></button>`;
    }).join('');
});

document.getElementById('minimized').innerHTML = ('<div><span data-icon="docBars"></span>' +
    '<button data-icon="restore" aria-label="还原"></button>' +
    '<button data-icon="max" aria-label="最大化"></button>' +
    '<button data-icon="close" aria-label="关闭"></button></div>').repeat(6);

document.querySelectorAll('[data-icon]').forEach(el => {
    el.insertAdjacentHTML('afterbegin', `<svg viewBox="0 0 20 20">${icons[el.dataset.icon]}</svg>`);
});

// ---------- charts ----------
const STEP = 4;
const colors = { b: '#00f', g: '#0f0', r: '#f00' };
const draw = (id, markup) => document.getElementById(id).insertAdjacentHTML('beforeend', markup);
const pairs = text => text.trim().split(/\s+/).map(p => p.split(',').map(Number));

// raw chart units -> pane pixels
const scaler = (x0, y0, kx = 3, ky = 3) => (x, y) => [((x - x0) / kx).toFixed(1), ((y - y0) / ky).toFixed(1)];

function rangeBars(id, text, at, start = 0) {
    let out = '';
    text.trim().split(/\s+/).forEach((range, i) => {
        const [hi, lo] = range.split('-').map(v => Math.round(at(0, +v)[1]));
        const x = (start + i) * STEP;
        const tick = Math.round(hi + (lo - hi) * (0.25 + (i * 7 % 5) / 8));
        out += `M${x} ${hi}h2V${lo}h-2zM${x + 2} ${tick}h1v1h-1z`;
    });
    draw(id, `<path d="${out}" fill="#333"/>`);
}

function zigzag(id, points) {
    for (let i = 1; i < points.length; i++) {
        const [x1, y1] = points[i - 1], [x2, y2] = points[i];
        draw(id, `<path d="M${x1} ${y1}L${x2} ${y2}" stroke="${+y2 < +y1 ? '#3a6ea5' : '#c76a3e'}" stroke-width="1.5"/>`);
    }
}

// each item is "colour x,y"; the colour belongs to the piece that ends there
function impulse(id, text, at) {
    let last;
    text.trim().split(/\s+/).forEach(item => {
        const [x, y] = at(...item.slice(1).split(',').map(Number));
        if (last) draw(id, `<path d="M${last}L${x} ${y}" stroke="${colors[item[0]]}" stroke-width="2" stroke-linecap="round"/>`);
        last = `${x} ${y}`;
    });
}

function histogram(id, text, base, palette) {
    draw(id, text.trim().split(/\s+/).map((v, i) => {
        const h = +v.slice(1);
        return `<rect x="${i * STEP}" y="${base - h}" width="2" height="${h}" fill="${palette[v[0]]}"/>`;
    }).join(''));
}

function average(id, text, at) {
    const d = pairs(text).map(([x, y]) => at(x, y).join(' ')).join('L');
    draw(id, `<path d="M${d}" fill="none" stroke="#8c8c00"/>`);
}

function grid(id, xs, ys) {
    const d = xs.map(x => `M${x}.5 0V500`).concat(ys.map(y => `M0 ${y}.5H960`)).join('');
    draw(id, `<path d="${d}" stroke="#dfdfdf" stroke-dasharray="1 3"/>`);
}

function sessions(id, xs) {
    draw(id, `<path d="${xs.map(x => `M${x}.5 0V500`).join('')}" stroke="#222" stroke-dasharray="9 6 3 6"/>`);
}

function level(id, y, text, color, dashed) {
    draw(id, `<path d="M0 ${y}.5H2000" stroke="${color}" ${dashed ? 'stroke-dasharray="18 6"' : ''}/><text class="label" x="1" y="${y - 3}">${text}</text>`);
}

function timeAxis(id, width, ticks) {
    draw(id, `<path d="M0 .5H${width}" stroke="#333" stroke-width="1.500"/>` + ticks.map(([x, label]) =>
        `<path d="M${x}.5 0v3" stroke="#333"/><text x="${x + 2}" y="14">${label || ''}</text>`).join(''));
}

function valueAxis(id, rows, minor) {
    draw(id, rows.map(([y, label]) => `<path d="M0 ${y}h4M0 ${y + minor}h2" stroke="#333"/><text x="6" y="${y + 4}">${label}</text>`).join(''));
}

function priceTag(id, y, text, color) {
    draw(id, `<path d="M1 ${y}l5-6h52v13H6z" fill="${color}"/><text x="9" y="${y + 4}" style="fill:#fff">${text}</text>`);
}

const marker = (x, y, color, down) => `<path transform="translate(${x} ${y})${down ? ' rotate(180)' : ''}" d="M0-5l4 5H2.500v4h-5V0H-4z" fill="${color}"/>`;
const soft = { b: '#6ba0c8', o: '#d08b68' };
const strong = { b: '#3a6ea5', o: '#c76a3e', w: '#fff' };

// 2500 tick bars
let at = scaler(18, 99);
grid('tick-price', [89, 173, 269, 361, 433], [74, 104, 134, 164, 194, 224, 254, 283]);
sessions('tick-price', [13, 53, 137, 229, 321]);
level('tick-price', 70, '15,029', '#008000');
level('tick-price', 117, '14,716', '#008000');
level('tick-price', 228, '13,967', '#008000');
rangeBars('tick-price', `878-910 870-908 865-895 850-890 850-900 870-925 890-940 930-975 950-995 930-970 920-965 905-945 895-930 885-915 885-920 895-930
900-945 895-935 893-925 895-930 910-967 920-945 920-965 930-955 925-955 925-950 925-950 912-960 912-930 915-935 895-935 873-925 880-950 925-982 890-960
835-945 840-875 850-885 845-880 828-870 808-865 810-858 755-835 730-770 708-745 712-750 703-740 715-745 705-738 648-738 615-700 612-660 598-645 612-640
615-665 625-662 610-645 605-640 580-635 610-660 615-645 628-655 630-680 640-712 655-712 655-733 670-702 650-705 650-685 655-690 665-690 660-695 488-692
495-570 470-550 472-545 495-545 515-600 580-617 575-608 530-608 515-575 513-553 505-550 485-518 463-510 455-500 465-508 440-495 380-487 380-430 375-408
340-392 335-370 335-365 322-370 312-435 395-450`, at);
impulse('tick-price', `b18,930 b45,920 b62,912 b80,911 r100,917 r125,925 r145,925 b160,925 g190,919 r215,918 g240,918 r280,925 b340,932 g370,932 g400,926
r410,931 r430,931 g450,920 g480,912 g515,887 b525,878 g575,827 b603,808 b612,793 g648,750 b700,705 b740,683 b768,677 r825,682 b840,680 g852,681 b882,672
g910,630 g935,610 b948,610 r972,605 b995,597 g1030,572 g1055,557 b1067,550 g1110,510 g1150,460 b1170,445 b1188,441`, at);
zigzag('tick-price', pairs(`21,905 57,862 105,970 117,955 129,962 177,898 213,920 237,910 273,932 287,960 330,937 345,930 357,917 369,927 393,888 417,955
445,845 465,862 501,815 513,828 537,735 549,738 561,712 585,738 657,618 669,645 705,615 717,625 729,615 789,695 837,660 877,688 909,478 945,597 1041,482
1053,497 1125,338 1149,347 1161,330 1187,435`).map(p => at(...p)));
draw('tick-price', `<path d="M129 267L229 140M138 293L237 163M257 158L441 3M289 199L441 72" stroke="#f26a2a" fill="none"/>
    <path d="M254 154h7v7h-7zM438 1h4v4h-4z" fill="#111"/>`);

grid('tick-ww', [89, 173, 361], [107]);
sessions('tick-ww', [13, 53, 137, 229, 321]);
histogram('tick-ww', `o22 b6 b10 b14 o6 o16 o23 o32 b7 o5 b5 b10 b15 b19 o8 o14 o22 b7 b13 o9 o18 b5 o6 b4 b8 b11 o3 b6 b9 o5 b4 b9 o9 o16 b6 b14 o10 o17 b7
b14 b23 o8 b11 b19 o10 b6 o5 o10 b4 b12 b19 b25 b32 b35 o6 b5 b9 b13 o8 b9 o8 o15 o21 o34 o42 b8 b13 b16 b20 o4 o7 o9 b16 b23 b28 o6 o10 o18 b8 b13 b17
b23 b30 b39 b47 b56 o11 b9 b15 b25 b31 b37 b45 o6 o10 b4 o12 o19`, 115, soft);

grid('tick-volume', [89, 173, 361], [54]);
sessions('tick-volume', [13, 53, 137, 229, 321]);
histogram('tick-volume', `w46 b27 b13 b17 o23 o63 o34 o50 b31 o17 b22 b21 b26 b16 o40 o31 o43 b32 b35 o47 o55 b22 o23 b16 o14 b6 o5 b25 b11 o23 b14 b27 o45
o42 b23 b47 o52 o42 b36 b35 b53 o40 b60 b43 o51 b25 o22 o21 b9 b46 b43 o29 b33 b12 o30 b18 b16 b17 o38 b47 o43 o39 o29 o79 o42 b43 b20 b13 b12 o11 o10
o6 b98 b33 b30 o28 o17 o45 b38 b24 b19 b30 b40 b52 b43 b52 o64 b45 b33 b57 b35 b29 b43 o28 o18 b14 o68 o38`, 126, strong);
average('tick-volume', `18,668 40,670 65,683 90,677 110,671 140,670 180,667 230,666 262,662 300,670 345,682 375,693 400,693 430,687 470,690 510,685 550,676
600,682 680,683 710,678 740,671 775,666 790,665 810,669 830,671 855,678 870,686 900,684 935,686 950,681 1000,683 1040,674 1065,668 1100,666 1130,668
1160,676 1188,672`, scaler(18, 396));
timeAxis('tick-time', 560, [[1], [17, '08'], [89, '09'], [145], [173, '10'], [269, '11'], [289], [361, '12'], [433]]);

// 5 minutes
grid('five-price', [65, 209, 281, 369, 457], [66, 104, 143, 181, 219, 257, 296]);
sessions('five-price', [137]);
level('five-price', 57, '15,024 Yesterday High', '#008080', true);
level('five-price', 173, '14,720', '#008080');
level('five-price', 315, '14,348', '#008080');
rangeBars('five-price', `705-757 685-720 685-718 685-725 690-730 692-755 705-768 735-790 752-795 765-815 775-825 773-822 790-878 845-910 838-885 840-902
890-955 960-1025 985-1045 1003-1053 985-1040 943-990 950-1010 975-1030 960-1005 933-985 945-980 935-978 908-958 888-928 883-918 880-910 870-905 862-900
865-898 793-853 818-855 810-850 822-870 808-870 815-855 823-882 820-880 780-840 752-815 738-768 742-775 738-770 700-765 660-712 665-725 678-735 682-725
658-705 633-705 655-700 655-752 705-765 690-773 668-752 670-712 680-715 660-705 643-685 645-685 603-668 610-640 542-635 518-575 448-540 480-515 483-530
485-528 478-515 440-510 445-503 470-503 460-510 460-495 445-490 370-460 348-420 335-400 328-368 316-360 328-402 328-372 332-372 332-378 352-380 358-400
346-370 348-380 345-370 342-368 305-366 300-325 294-333 307-340 303-330 264-318 468-560 528-580 492-565 495-540 530-588 553-628 575-622 543-598 565-592`, at);
impulse('five-price', `b18,927 b50,870 b85,832 b120,816 b140,813 r160,817 r190,830 b205,835 r220,850 r250,888 b290,915 b325,930 b365,930 g430,915 g480,888
b505,878 b515,877 r530,872 g575,835 b600,820 g622,797 b680,755 b697,747 r733,743 g755,735 b770,730 g817,702 g880,625 b910,590 g925,580 b970,547 b983,533
g1040,463 b1080,430 b1130,410 b1160,398 g1190,378 b1205,373 g1222,362 g1236,383 r1280,430 r1305,462 b1331,485`, at);
zigzag('five-price', pairs(`21,742 45,697 57,715 72,707 141,815 155,803 180,878 192,857 238,1033 273,955 287,990 321,948 335,960 405,882 417,890 429,872
465,825 477,843 490,820 517,865 561,750 575,765 609,680 622,722 681,662 706,748 731,683 755,703 801,617 815,628 909,443 945,490 1030,325 1042,365 1054,345
1090,375 1112,350 1126,366 1172,305 1187,328 1221,300 1234,560 1259,510 1297,618 1331,575`).map(p => at(...p)));
draw('five-price', marker(437, 178, '#00f'));

grid('five-ww', [65, 209, 281, 369, 457], [87]);
sessions('five-ww', [137]);
histogram('five-ww', `b14 b18 b21 o4 b5 o6 o10 o14 o16 o18 o22 b4 o7 o14 b5 o5 o9 o18 o23 b6 b9 b14 o5 b5 b9 b12 o4 b4 b8 b11 b13 b15 b18 o4 b4 b13 b19 b24
o7 b6 o6 o14 b7 b14 b21 b28 o6 b6 b13 b22 o8 b7 b12 b19 b26 b34 o10 o18 b6 b13 b6 o11 b5 b10 b13 b19 o5 b10 b16 b26 b33 b38 b42 b45 b50 o7 o10 o14 b4 b8
b15 b21 b26 b30 b34 o7 b5 o4 o7 o10 b5 b6 o4 b3 b4 b6 b8 o4 b3 b5 b8 o18 b10 b16 o6 o11 o18 b5 b9 b10`, 125, soft);

grid('five-volume', [65, 209, 281, 369, 457], [39, 80]);
sessions('five-volume', [137]);
histogram('five-volume', `b35 b27 b19 o16 b20 o27 o24 o22 o12 o15 o20 b17 o32 o43 b21 o19 o27 o50 o28 b26 b19 b32 o19 b23 b21 b17 o13 b17 b21 b18 b14 b13
b15 o18 b13 b54 o35 b29 o34 b26 o29 o47 b33 b41 b42 b37 o25 b24 b42 b52 o37 b35 o24 b43 b41 b45 o50 o46 b28 b39 o28 o26 b23 o28 b19 b35 o23 b50 b35 b57
o38 b30 o24 b19 b29 o31 o19 o21 b18 b19 b42 b38 b26 b26 b24 o33 b22 o15 o19 o16 b19 b12 o14 b8 b9 b14 b13 o16 b10 b10 b20 o94 b47 b38 o27 o27 o42 b23
w23 b4`, 123, strong);
average('five-volume', `18,767 60,763 100,763 150,759 190,750 215,745 232,740 248,738 262,754 320,758 380,760 430,764 480,758 510,753 545,750 570,747 590,750
650,745 690,735 720,729 765,723 800,723 815,727 860,721 900,725 960,733 1010,733 1050,738 1075,745 1125,748 1165,752 1187,760 1215,768 1235,758 1300,755
1330,757`, scaler(18, 459));
timeAxis('five-time', 620, [[65, '11:30'], [137, '15:00'], [209, '22:30'], [281, '12'], [369, '01:50'], [457, '10:10']]);

// 1 minute, the second half of the session is read on its own scale
const early = scaler(17, 99, 2.45), late = scaler(-1569, -96);
const hours = [[45, '00:24'], [117, '00:42'], [189, '01:00'], [269, '01:20'], [349, '01:40'], [429, '02:00'], [501, '02:18'], [573, '09:06'], [645, '09:24'], [717, '09:42'], [789, '10:00']];
const hourXs = hours.map(h => h[0]);
const prices = [];
for (let i = 0; i < 18; i++) {
    const y = Math.round(45 + i * 22.65);
    prices.push([y + 0.5, (15040 - i * 20).toLocaleString('en-US')]);
}
grid('one-price', hourXs, prices.map(p => p[0] - 0.5));
level('one-price', 59, '15,027 Yesterday High', '#008000', true);
level('one-price', 421, '14,708', '#008000');
rangeBars('one-price', `945-985 905-960 905-980 900-940 850-910 843-905 840-900 793-920 798-920 903-935 850-935 900-958 905-940 910-965 920-980 910-962
910-965 920-962 900-990 950-992 940-1004 920-965 920-955 925-950 875-940 855-905 850-908 882-920 880-940 870-915 845-905 825-880 808-850 733-840 705-785
680-805 637-735 590-680 595-680 570-655 525-620 522-600 590-680 625-658 620-658 600-655 545-640 478-560 468-535 472-535 480-550 480-550 460-528 443-515
423-490 455-495 450-515 447-515 450-545 465-640 575-675 545-600 545-605 550-630 545-625 500-600 483-565 465-520 483-530 480-520 478-550 500-540 490-525
480-530 475-530 475-570 540-600 545-605 550-610 555-595 570-615 575-625 575-620 590-662 585-655 545-625 560-610 565-635 565-615 560-600 555-600 535-585
520-585 512-560 505-560 515-565 555-590 560-585 560-595 550-595 545-590 545-580 535-585 520-560 530-570 540-570 545-575 538-575 535-565 530-560 530-560
470-550 395-500 395-440 420-460 405-455 400-440 388-430 370-475 435-503 440-490 450-470 450-487 445-480 430-475 393-440 400-425 405-437 410-437 412-440
415-445 420-457 395-450 358-430 375-415 365-405 312-382 282-388`, early);
rangeBars('one-price', `687-920 685-810 753-872 850-900 855-962 882-985 925-1010 912-1017 958-1017 932-1012 895-965 853-942 843-915 757-845 762-800 780-832
778-830 763-812 780-900 855-898 862-935 912-993 900-972 892-960 925-975 935-972 953-1070 992-1078 1030-1142 1083-1152 1053-1133 1018-1088 993-1075
1012-1060 1002-1058 985-1033 938-1015 912-962 925-1025 1000-1053 975-1020`, late, 138);
impulse('one-price', `g19,1012 g50,987 g80,958 b90,943 b100,943 r130,937 r170,938 b200,944 r210,945 b222,950 g235,950 b248,948 g275,933 b290,932 b305,925
g330,910 g350,885 g380,825 g425,740 b462,707 b472,692 g500,650 b520,628 g535,610 b545,595 g550,590 b580,562 g592,554 r605,563 r645,571 b658,567 g700,550
b725,542 g748,529 b755,533 r800,552 r828,563 b850,575 g870,578 b880,578 g915,578 g940,567 b960,566 r985,566 g995,568 r1030,568 g1055,563 g1105,555
g1140,520 b1155,505 g1170,490 b1185,488 r1195,482 b1205,483 r1220,480 b1240,473 g1265,460 b1310,452 g1335,438 g1362,417`, early);
impulse('one-price', `b79,222 b92,275 r150,520 b170,590 b190,648 b210,692 b230,722 b247,730 g272,745 b285,748 g298,753 g306,765 r340,805 b365,828 r390,850
r440,935 b465,960 b500,973 g525,976 g537,971 g548,975 r571,982`, late);
zigzag('one-price', pairs(`19,965 70,857 80,890 90,805 200,990 267,865 287,915 413,538 462,632 492,505 511,553 541,455 569,487 580,455 599,637 619,567
640,613 668,488 717,530 746,480 845,630 854,575 866,603 934,515 962,585 1030,535 1062,565 1118,403 1137,452 1168,388 1178,470 1188,440 1217,475 1256,405
1296,438 1354,320`).map(p => early(...p)).concat(pairs(`150,987 164,928 175,1007 247,787 270,812 284,778 345,970 356,902 438,1132 475,1017 487,1045 535,935
571,1020`).map(p => late(...p))));
draw('one-price', `<path d="M841 192.500h28" stroke="#f26a2a"/><text class="label" x="806" y="219">Stop out here</text>` + marker(853, 235, '#f00', true) +
    `<text x="707" y="409" style="font-size:12px;fill:#a52a2a">Long</text>` + marker(713, 400, '#00f'));
valueAxis('one-price-scale', prices, 11);
priceTag('one-price-scale', 366, '14,757', '#333');

grid('one-ww', hourXs, [32, 64, 96, 128]);
histogram('one-ww', `b6 b10 b13 b15 b20 b24 o5 b7 o8 o14 o19 o22 o24 o28 o31 o34 o36 o39 o44 b4 b8 b10 b12 b13 b16 b19 o4 o6 o4 b6 b9 b11 b15 b21 b26 b33
b41 b46 b52 b58 b64 o5 o12 o15 o17 o20 b7 b13 b18 o5 o8 b5 b8 b13 o6 o8 o12 b4 b3 o12 b8 b12 o4 o8 b4 b7 b10 o6 o8 o10 o12 o14 b3 b5 b7 o4 o9 o11 o13
o15 o17 o20 o22 o25 o27 b5 o3 b4 b6 b7 b8 b9 b12 b14 o3 o6 o8 b2 b3 b5 b6 b7 b8 b9 o2 o3 o4 b2 b3 b4 b5 b8 b12 o4 o5 b3 b5 o6 b5 o4 o3 o5 o6 b3 b4 b6
b7 o2 o3 o5 o6 b3 b4 b9 b11 b13 b15 o5 o31 o46 o56 o66 o77 o87 b10 o9 b6 b10 b16 b22 b26 b35 o5 o11 o4 b4 o9 o12 o15 o23 b4 b3 o8 o10 o16 o24 o32 o40
b6 b10 b14 o3 b4 b6 b10 b14 o4 o8 o10`, 161, soft);
valueAxis('one-ww-scale', [[32.5, '40,000.00'], [64.5, '30,000.00'], [96.5, '20,000.00'], [128.5, '10,000.00'], [160.5, '0.00']], 16);
priceTag('one-ww-scale', 148, '3,995.00', '#6ba0c8');
priceTag('one-ww-scale', 152, '2,747.00', '#d08b68');

grid('one-volume', hourXs, [30, 63, 96, 129]);
histogram('one-volume', `b11 b23 b15 b11 b30 b21 o21 b31 o38 w29 w25 o17 o16 b19 b15 w17 o13 b13 o27 b13 b20 b15 o8 b9 b16 b18 o16 b13 o17 b9 b16 b15 b18
b31 b29 b34 b43 b30 b28 b36 b28 o22 o36 w14 o14 w13 b29 b33 b26 b20 b18 o21 b17 o22 b24 o12 w24 b17 o13 o47 b35 b21 o17 b19 b14 b17 b18 o26 b16 o19 o14
b9 b9 b12 b11 o17 o27 o9 w13 b12 b9 o14 b12 o18 w10 b20 o12 b15 o11 b8 b8 b5 b7 b12 b10 b10 o15 b5 b8 w8 b9 b5 o3 b11 b9 o7 b6 b5 b8 b6 o3 b14 b23 o14
b10 b8 w8 b9 o23 b16 o9 b9 o5 b8 b6 o10 b9 o8 o6 o8 b6 o8 b10 b25 o13 b9 b14 o22 o133 o78 o53 o54 o57 o52 b48 o38 b27 b23 b32 b30 b23 b44 o21 o29 b16
o16 o27 b17 o16 o40 o16 b17 o19 o11 b34 b41 o41 w42 b26 b21 b22 o12 b13 b15 b23 b18 o17 b19 b12`, 163, strong);
average('one-volume', `13,958 28,964 65,964 80,972 120,982 170,989 220,989 260,983 310,980 320,977 390,972 405,967 430,969 460,980 500,984 575,994 620,1003
670,1008 710,1013 765,1014 775,1015 800,1012 850,1016 885,1012 900,1004 910,990 940,973 970,963 1000,953 1040,943 1065,943 1093,932 1100,943 1120,958
1140,969 1163,973`, scaler(11, 552, 1.6165));
valueAxis('one-volume-scale', [[30.5, '8,000.00'], [63.5, '6,000.00'], [96.5, '4,000.00'], [129.5, '2,000.00'], [161.5, '0.00']], 16.5);
priceTag('one-volume-scale', 151, '656.00', '#3a6ea5');
timeAxis('one-time', 898, hours);
```
